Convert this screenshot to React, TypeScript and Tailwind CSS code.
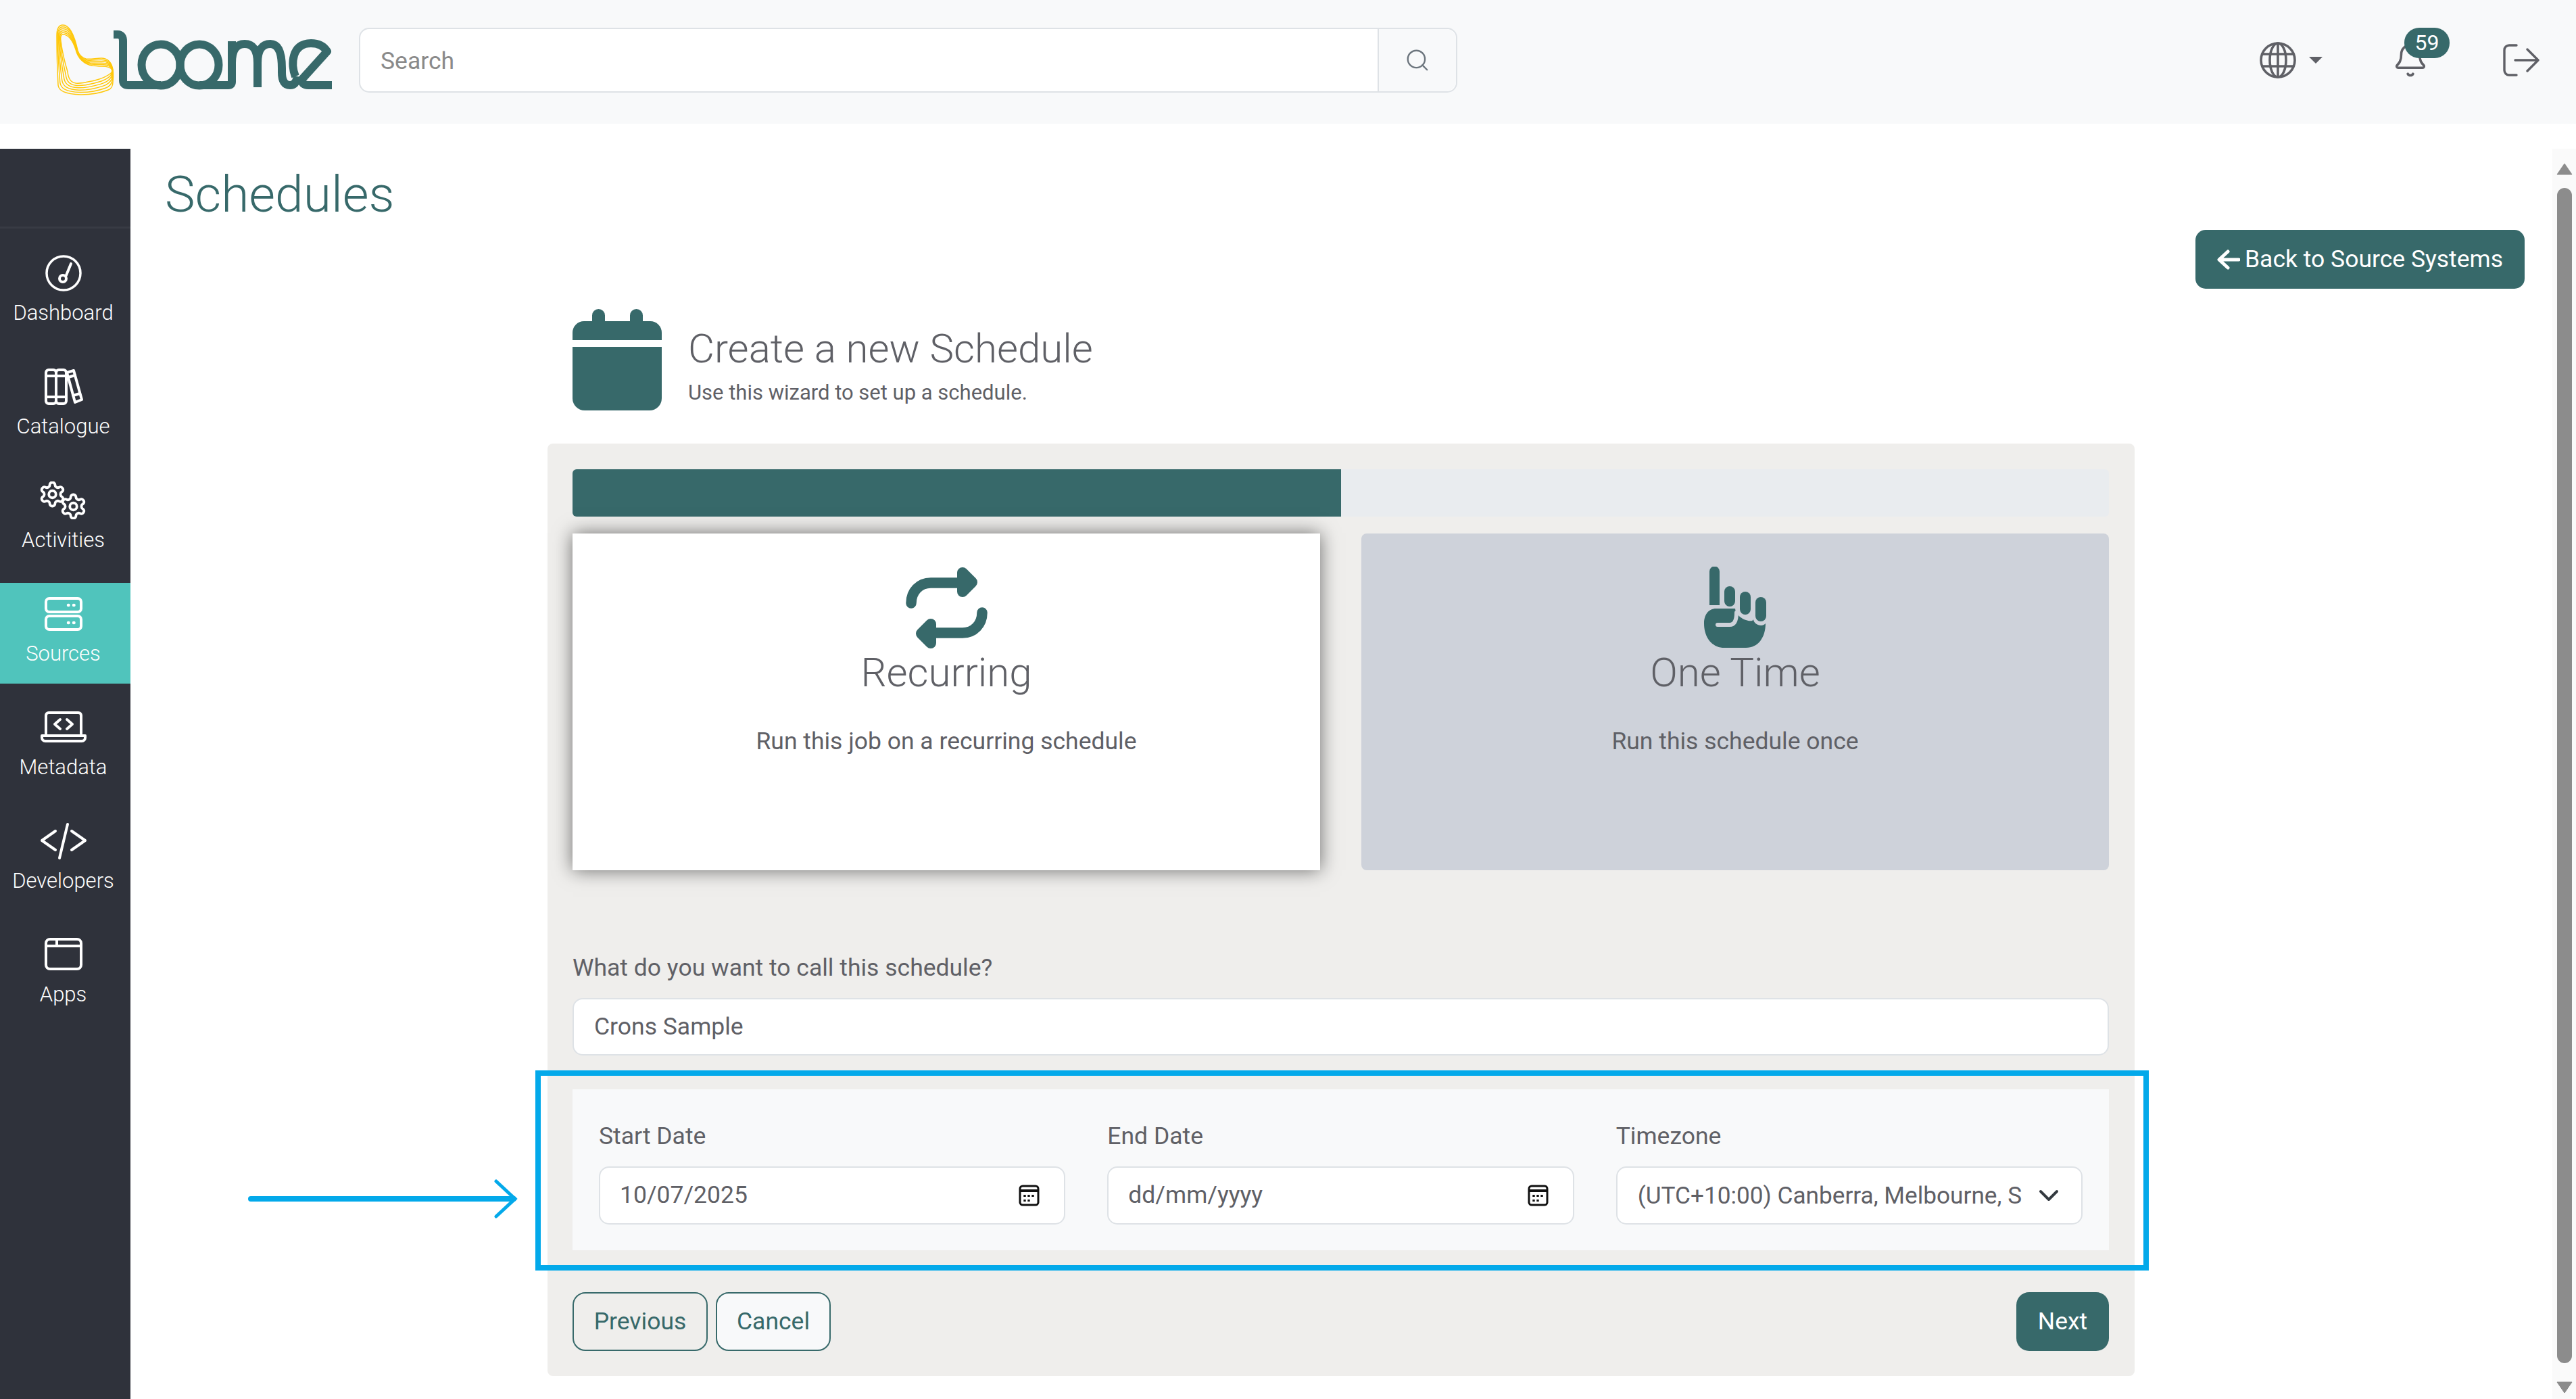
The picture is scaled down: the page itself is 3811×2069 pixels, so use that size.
import { Bell, Search } from "lucide-react";
import type { ReactNode } from "react";

const gearPath =
  "M12.22 2h-.44a2 2 0 0 0-2 2v.18a2 2 0 0 1-1 1.73l-.43.25a2 2 0 0 1-2 0l-.15-.08a2 2 0 0 0-2.73.73l-.22.38a2 2 0 0 0 .73 2.73l.15.1a2 2 0 0 1 1 1.72v.51a2 2 0 0 1-1 1.74l-.15.09a2 2 0 0 0-.73 2.73l.22.38a2 2 0 0 0 2.73.73l.15-.08a2 2 0 0 1 2 0l.43.25a2 2 0 0 1 1 1.73V20a2 2 0 0 0 2 2h.44a2 2 0 0 0 2-2v-.18a2 2 0 0 1 1-1.73l.43-.25a2 2 0 0 1 2 0l.15.08a2 2 0 0 0 2.73-.73l.22-.39a2 2 0 0 0-.73-2.73l-.15-.08a2 2 0 0 1-1-1.74v-.5a2 2 0 0 1 1-1.74l.15-.09a2 2 0 0 0 .73-2.73l-.22-.38a2 2 0 0 0-2.73-.73l-.15.08a2 2 0 0 1-2 0l-.43-.25a2 2 0 0 1-1-1.73V4a2 2 0 0 0-2-2z";

function NavSvg({ children }: { children: ReactNode }) {
  return (
    <svg width="70" height="56" viewBox="0 0 70 56" fill="none" stroke="white" strokeWidth="4" strokeLinecap="round" strokeLinejoin="round">
      {children}
    </svg>
  );
}

const navItems: { label: string; active?: boolean; icon: ReactNode }[] = [
  {
    label: "Dashboard",
    icon: (
      <NavSvg>
        <ellipse cx="35" cy="28" rx="25" ry="25" strokeWidth="3.5" />
        <path d="M46 14 39 31" />
        <circle cx="34" cy="36" r="5" />
      </NavSvg>
    ),
  },
  {
    label: "Catalogue",
    icon: (
      <NavSvg>
        <rect x="9" y="3" width="15" height="50" rx="4" />
        <rect x="24" y="3" width="15" height="50" rx="4" />
        <path d="M9 12h30M9 43h30" />
        <path d="M40 7l10-3 12 43-10 4z" />
        <path d="M42 14l10-3M49 41l10-3" />
      </NavSvg>
    ),
  },
  {
    label: "Activities",
    icon: (
      <NavSvg>
        <g transform="translate(-2.5 -2) scale(1.75)" strokeWidth="2.2">
          <path d={gearPath} />
          <circle cx="12" cy="12" r="3" />
        </g>
        <g transform="translate(28.5 16) scale(1.75)" strokeWidth="2.2">
          <path d={gearPath} />
          <circle cx="12" cy="12" r="3" />
        </g>
      </NavSvg>
    ),
  },
  {
    label: "Sources",
    active: true,
    icon: (
      <NavSvg>
        <rect x="9" y="5" width="52" height="20" rx="5" />
        <rect x="9" y="31" width="52" height="20" rx="5" />
        <path d="M42 15h.5M50 15h.5M42 41h.5M50 41h.5" strokeWidth="4.5" />
      </NavSvg>
    ),
  },
  {
    label: "Metadata",
    icon: (
      <NavSvg>
        <path d="M9 37V10a4 4 0 0 1 4-4h44a4 4 0 0 1 4 4v27" />
        <path d="M3 40h64v3a5 5 0 0 1-5 5H8a5 5 0 0 1-5-5z" />
        <path d="M30 16l-8 7 8 7M40 16l8 7-8 7" />
      </NavSvg>
    ),
  },
  {
    label: "Developers",
    icon: (
      <NavSvg>
        <path d="M23 14 3 28l20 14M47 14l20 14-20 14" transform="translate(0 -1)" />
        <path d="M41 3 29 53" />
      </NavSvg>
    ),
  },
  {
    label: "Apps",
    icon: (
      <NavSvg>
        <rect x="9" y="5" width="52" height="44" rx="6" />
        <path d="M9 15h52M25 5v10" />
      </NavSvg>
    ),
  },
];

// chair mark of the logo: ribbon of lines going from the outer edge to the inner one
const chairOuter = [93, 36, 87, 36, 84, 42, 84, 52, 84, 80, 85, 105, 86, 125, 87, 133, 95, 138, 120, 139, 135, 139, 150, 136, 160, 132, 165, 130, 167, 127, 167, 120, 168, 110, 168, 104, 166, 98, 164, 90, 158, 85, 150, 85, 142, 85, 134, 87, 127, 86, 120, 84, 117, 80, 115, 74, 112, 60, 105, 36, 93, 36];
const chairInner = [93, 50, 90, 50, 89, 54, 90, 60, 92, 75, 96, 92, 100, 105, 101, 115, 104, 121, 112, 122, 122, 123, 130, 120, 140, 118, 148, 116, 158, 112, 163, 108, 165, 107, 166, 105, 166, 103, 165, 100, 162, 97, 150, 97, 145, 97, 141, 96, 137, 96, 125, 95, 115, 85, 112, 72, 109, 63, 103, 50, 93, 50];

function chairLine(t: number) {
  const p = chairOuter.map((v, i) => (v + (chairInner[i] - v) * t).toFixed(1));
  let d = `M${p[0]} ${p[1]}`;
  for (let i = 2; i < p.length; i += 6) {
    d += ` C${p[i]} ${p[i + 1]} ${p[i + 2]} ${p[i + 3]} ${p[i + 4]} ${p[i + 5]}`;
  }
  return d + "Z";
}

function Logo() {
  return (
    <svg width="420" height="110" viewBox="80 33 420 110" fill="none" className="shrink-0">
      <g stroke="#ffc80a" strokeWidth="1.5">
        {[0, 1, 2, 3, 4, 5].map((i) => (
          <path key={i} d={chairLine(i / 5)} />
        ))}
      </g>
      <g stroke="#37696a" strokeWidth="12" strokeLinejoin="round">
        <path d="M168 50H174Q182 50 182 60V118Q182 125 190 125H238" />
        <ellipse cx="238" cy="95" rx="28.5" ry="30.5" />
        <ellipse cx="295" cy="95" rx="28.5" ry="30.5" />
        <path d="M295 125H338Q343 125 343 120V60" />
        <path d="M343 92Q343 64 362 64Q381 64 381 92V128" />
        <path d="M381 92Q381 64 400 64Q417 64 417 100V106Q417 125 429 125Q438 125 440 112" />
        <path d="M437 112C430 95 431 63 460 63C471 63 479 67 484 75L447 116C445 122 450 125 456 125H491" />
      </g>
    </svg>
  );
}

function RepeatHalf() {
  return (
    <>
      <path d="M9 54C9 37 21 24 38 24H85" fill="none" strokeWidth="15.5" strokeLinecap="round" />
      <path d="M85 9 99 23 85 37Z" strokeWidth="16" strokeLinejoin="round" />
    </>
  );
}

function Wizard() {
  return (
    <div className="ml-[617px] mt-[30px] w-[2348px] shrink-0">
      <div className="ml-[37px] flex items-start">
        <svg width="132" height="150" viewBox="0 0 132 150" fill="#37696a" className="shrink-0">
          <path d="M29 9.5a9.5 9.5 0 0 1 19 0V18h37V9.5a9.5 9.5 0 0 1 19 0V18h11a17 17 0 0 1 17 17v11H0V35a17 17 0 0 1 17-17h12z" />
          <path d="M0 56h132v76a18 18 0 0 1-18 18H18a18 18 0 0 1-18-18z" />
        </svg>
        <div className="ml-[39px] pt-[24px]">
          <h2 className="text-[60px] font-light leading-[70px] text-[#5f6066]">Create a new Schedule</h2>
          <p className="mt-[8px] text-[31px] leading-[44px] text-[#5f6066]">Use this wizard to set up a schedule.</p>
        </div>
      </div>

      <div className="mt-[49px] rounded-[8px] bg-[#efeeec] pb-[37px] pl-[37px] pr-[38px] pt-[38px]">
        <div className="h-[70px] overflow-hidden rounded-[6px] bg-[#e9ecef]">
          <div className="h-full w-1/2 bg-[#37696a]" />
        </div>

        <div className="mt-[25px] flex gap-[61px]">
          <div className="h-[498px] w-[1106px] bg-white pt-[49px] text-center shadow-[0_0_26px_rgba(0,0,0,0.55)]">
            <svg width="122" height="122" viewBox="0 0 122 122" className="mx-auto block" fill="#37696a" stroke="#37696a">
              <RepeatHalf />
              <g transform="rotate(180 61.5 61)">
                <RepeatHalf />
              </g>
            </svg>
            <h3 className="text-[60px] font-light leading-[70px] text-[#5f6066]">Recurring</h3>
            <p className="mt-[41px] text-[35.5px] leading-[50px] text-[#5f6066]">Run this job on a recurring schedule</p>
          </div>
          <div className="h-[498px] flex-1 rounded-[8px] bg-[#ced2da] pt-[49px] text-center">
            <svg width="92" height="122" viewBox="0 0 92 122" className="mx-auto block" fill="#37696a">
              <path d="M8 7a7.5 7.5 0 0 1 15 0v50H8z" />
              <rect x="30" y="29" width="16" height="30" rx="8" />
              <rect x="53" y="37" width="16" height="34" rx="8" />
              <rect x="76" y="45" width="16" height="36" rx="8" />
              <path d="M0 84C0 72 6 62 18 62H46C48 78 72 84 73 78C74 86 86 90 91 84C91 105 80 120 62 120H30C12 120 0 105 0 84Z" />
              <path d="M20 86H38C45 86 48 80 48 68" fill="none" stroke="#ced2da" strokeWidth="6" strokeLinecap="round" />
            </svg>
            <h3 className="text-[60px] font-light leading-[70px] text-[#5f6066]">One Time</h3>
            <p className="mt-[41px] text-[35.5px] leading-[50px] text-[#5f6066]">Run this schedule once</p>
          </div>
        </div>

        <div className="mt-[119px] text-[35.5px] leading-[50px] text-[#5f6066]">What do you want to call this schedule?</div>
        <div className="mt-[20px] flex h-[85px] items-center rounded-[15px] border-[2.4px] border-[#dee2e6] bg-white pl-[30px] text-[35.5px] text-[#5f6066]">
          Crons Sample
        </div>

        <div className="mt-[50px] grid grid-cols-3 gap-[62px] bg-[#f8f9fa] px-[39px] pb-[38px] pt-[44px]">
          <DateField label="Start Date" value="10/07/2025" />
          <DateField label="End Date" value="dd/mm/yyyy" />
          <div>
            <div className="mb-[20px] text-[35.5px] leading-[50px] text-[#5f6066]">Timezone</div>
            <div className="flex h-[86px] items-center justify-between rounded-[15px] border-[2.4px] border-[#dee2e6] bg-white pl-[30px] pr-[33px] text-[35.2px] text-[#5f6066]">
              <span className="whitespace-nowrap">(UTC+10:00) Canberra, Melbourne, S</span>
              <svg width="30" height="18" viewBox="0 0 30 18" fill="none" stroke="#343a40" strokeWidth="4" strokeLinecap="round" strokeLinejoin="round">
                <path d="M3 3l12 12L27 3" />
              </svg>
            </div>
          </div>
        </div>

        <div className="mt-[62px] flex items-center">
          <button className="h-[87px] w-[200px] rounded-[19px] border-[2.4px] border-[#37696a] text-[35.5px] text-[#37696a]">Previous</button>
          <button className="ml-[12px] h-[87px] w-[170px] rounded-[19px] border-[2.4px] border-[#37696a] bg-[#f8f9fa] text-[35.5px] text-[#37696a]">Cancel</button>
          <button className="ml-auto h-[87px] w-[137px] rounded-[19px] bg-[#37696a] text-[35.5px] text-white">Next</button>
        </div>
      </div>
    </div>
  );
}

function DateField({ label, value }: { label: string; value: string }) {
  return (
    <div>
      <div className="mb-[20px] text-[35.5px] leading-[50px] text-[#5f6066]">{label}</div>
      <div className="flex h-[86px] items-center justify-between rounded-[15px] border-[2.4px] border-[#dee2e6] bg-white pl-[29px] pr-[36px] text-[35.5px] text-[#5f6066]">
        <span>{value}</span>
        <svg width="31" height="32" viewBox="0 0 31 32" fill="none" stroke="#111" strokeWidth="3">
          <rect x="2" y="2" width="27" height="28" rx="4" />
          <path d="M2 9h27" strokeWidth="4" />
          <path d="M9 15v3M15 15v3M21 15v3M9 22v3M15 22v3" strokeWidth="3.4" />
        </svg>
      </div>
    </div>
  );
}

export default function App() {
  return (
    <div className="relative flex h-[2069px] w-[3811px] flex-col overflow-hidden bg-white font-[Roboto,sans-serif]">
      <header className="flex h-[183px] shrink-0 items-center bg-[#f8f9fa] pb-[6px] pl-[80px]">
        <Logo />
        <div className="ml-[31px] flex h-[96px] w-[1625px] rounded-[15px] border-[2.4px] border-[#dee2e6] bg-white">
          <div className="flex flex-1 items-center pl-[30px] pt-[4px] text-[35.5px] text-[#8a8a8a]">Search</div>
          <div className="flex w-[116px] items-center justify-center rounded-r-[15px] border-l-[2.4px] border-[#dee2e6] bg-[#f8f9fa]">
            <Search size={38} color="#6c757d" strokeWidth={1.5} />
          </div>
        </div>

        <div className="ml-auto flex items-center pr-[54px]">
          <svg width="54" height="54" viewBox="0 0 54 54" fill="none" stroke="#5f6066" strokeWidth="3.6">
            <circle cx="27" cy="27" r="25" />
            <ellipse cx="27" cy="27" rx="12" ry="25" />
            <path d="M27 2v50M5 18h44M5 36h44" />
          </svg>
          <svg width="20" height="10" viewBox="0 0 20 10" fill="#5f6066" className="ml-[19px]">
            <path d="M0 0h20L10 10z" />
          </svg>
          <div className="relative ml-[107px] h-[54px] w-[46px]">
            <Bell size={54} color="#5f6066" strokeWidth={1.6} className="absolute -left-[4px] top-0" />
            <span className="absolute left-[14px] top-[-21px] flex h-[45px] w-[67px] items-center justify-center rounded-[22px] bg-[#37696a] text-[32px] text-white">
              59
            </span>
          </div>
          <svg width="54" height="48" viewBox="0 0 54 48" fill="none" stroke="#5f6066" strokeWidth="3.4" strokeLinecap="round" strokeLinejoin="round" className="ml-[114px]">
            <path d="M20 2H9a7 7 0 0 0-7 7v30a7 7 0 0 0 7 7h11" />
            <path d="M18 24h34M36 8l16 16-16 16" />
          </svg>
        </div>
      </header>

      <div className="flex min-h-0 flex-1">
        <aside className="mt-[37px] w-[193px] shrink-0 bg-[#2f323b]">
          <div className="mt-[115px] h-[3px] bg-[#383b44]" />
          <nav className="mt-[20px] flex flex-col gap-[19px]">
            {navItems.map((item) => (
              <div key={item.label} className={`flex h-[149px] flex-col items-center pr-[6px] pt-[18px] ${item.active ? "bg-[#50c4bc]" : ""}`}>
                {item.icon}
                <span className="mt-[11px] text-[31px] font-light leading-[40px] text-white">{item.label}</span>
              </div>
            ))}
          </nav>
        </aside>

        <main className="flex min-w-0 flex-1 flex-col">
          <h1 className="pl-[51px] pt-[60px] text-[75px] font-light leading-[88px] text-[#37696a]">Schedules</h1>
          <div className="mt-[9px] flex justify-end pr-[41px]">
            <button className="flex h-[87px] w-[487px] items-center justify-center rounded-[15px] bg-[#37696a] text-[35.5px] text-white">
              <svg width="34" height="30" viewBox="0 0 34 30" fill="none" stroke="white" strokeWidth="5" strokeLinecap="round" strokeLinejoin="round" className="mr-[7px]">
                <path d="M16 3 3 15l13 12M4 15h28" />
              </svg>
              Back to Source Systems
            </button>
          </div>
          <Wizard />
        </main>

        <div className="mt-[37px] flex w-[35px] shrink-0 flex-col items-center bg-[#fafafa]">
          <svg width="24" height="18" viewBox="0 0 24 18" fill="#8c8c8c" className="mt-[21px] shrink-0">
            <path d="M12 1 23 17H1z" stroke="#8c8c8c" strokeLinejoin="round" />
          </svg>
          <div className="mt-[19px] h-[1738px] w-[22px] shrink-0 rounded-full bg-[#8c8c8c]" />
          <svg width="24" height="18" viewBox="0 0 24 18" fill="#8c8c8c" className="mt-[27px] shrink-0">
            <path d="M12 17 23 1H1z" stroke="#8c8c8c" strokeLinejoin="round" />
          </svg>
        </div>
      </div>

      {/* annotation drawn over the page */}
      <div className="absolute left-[792px] top-[1583px] h-[296px] w-[2387px] border-[8px] border-[#03a9ea]" />
      <svg className="absolute left-[360px] top-[1741px]" width="410" height="64" viewBox="0 0 410 64" fill="none" stroke="#03a9ea" strokeLinecap="round">
        <path d="M11 32H400" strokeWidth="8" />
        <path d="M374 6l28 26-28 26" strokeWidth="5" />
      </svg>
    </div>
  );
}
